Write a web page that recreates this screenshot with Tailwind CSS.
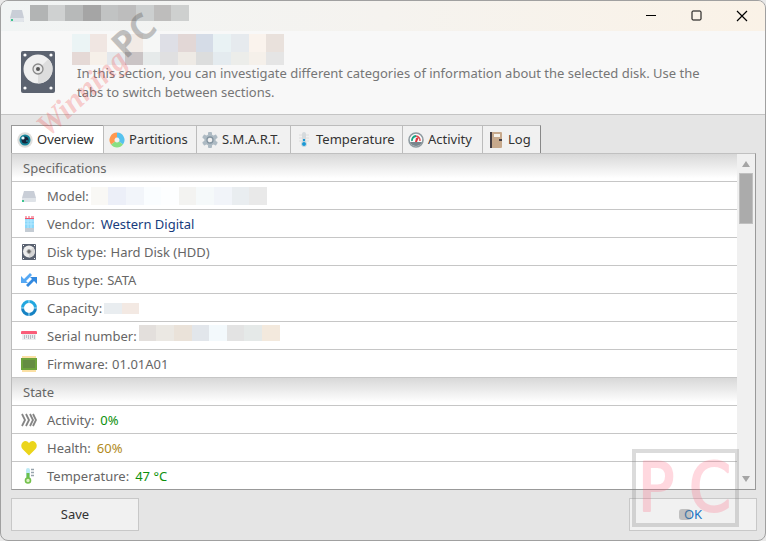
<!DOCTYPE html>
<html lang="en">
<head>
    <meta charset="UTF-8">
    <meta name="viewport" content="width=device-width, initial-scale=1.0">
    <title>Disk information</title>
    <script src="https://cdn.jsdelivr.net/npm/@tailwindcss/browser@4"></script>
</head>
<body class="bg-[#e9e9e9] font-['Noto_Sans','Open_Sans',sans-serif] text-[13px] leading-[19px] text-[#666]">

    <div class="relative flex h-screen min-h-96 flex-col overflow-hidden rounded-lg border border-[#a0a0a0] bg-[#e5e5e5]">

        <!-- Title bar -->
        <header class="flex h-[30px] shrink-0 items-center bg-linear-to-r from-[#f1f4f4] via-[#f5f3ef] to-[#faf2e7] pl-2">
            <svg class="h-4 w-4" viewBox="0 0 16 16"><path d="M3 2h10l2 8v4H1v-4z" fill="#c9ced7"/><path d="M1 10h14v3q0 1-1 1H2q-1 0-1-1z" fill="#e1e5ea"/><rect x="2" y="11" width="2" height="2" fill="#3fc48f"/></svg>
            <div class="ml-[5px] -mt-[6px] grid h-4 w-[159px] grid-cols-9">
                <i class="bg-[#b2b4b4]"></i><i class="bg-[#cfd1d1]"></i><i class="bg-[#b7b9b9]"></i><i class="bg-[#a5a5a5]"></i><i class="bg-[#c1c3c3]"></i><i class="bg-[#bdbdbd]"></i><i class="bg-[#cccfcf]"></i><i class="bg-[#bebdbc]"></i><i class="bg-[#ced0cf]"></i>
            </div>
            <div class="ml-auto flex h-full text-black">
                <button class="grid w-[46px] place-items-center" aria-label="Minimize"><svg class="h-3 w-3" viewBox="0 0 12 12" stroke="currentColor"><path d="M1 5.500h10"/></svg></button>
                <button class="grid w-[45px] place-items-center" aria-label="Maximize"><svg class="h-3 w-3" viewBox="0 0 12 12" fill="none" stroke="currentColor"><rect x="1" y="1" width="9" height="9" rx="1"/></svg></button>
                <button class="grid w-[46px] place-items-center" aria-label="Close"><svg class="h-3 w-3" viewBox="0 0 12 12" stroke="currentColor" stroke-width="1.200"><path d="M1 1l10 10M11 1L1 11"/></svg></button>
            </div>
        </header>

        <!-- Selected disk -->
        <div class="flex h-[84px] shrink-0 border-b border-[#c4c4c4] bg-[#f8f8f8] pl-5">
            <svg class="mt-5 h-[42px] w-[34px]" viewBox="0 0 34 42">
                <rect width="34" height="42" rx="2" fill="#5c6370"/>
                <g fill="#fff"><circle cx="4" cy="4" r="1.600"/><circle cx="30" cy="4" r="1.600"/><circle cx="4" cy="37" r="1.600"/><circle cx="30" cy="37" r="1.600"/></g>
                <circle cx="17" cy="18" r="14.500" fill="#f0f0f0"/><path d="M17 18l10.500-10A14.500 14.500 0 0 1 17 32.500z" fill="#ddd"/>
                <circle cx="17" cy="18" r="5" fill="#e8e8e8" stroke="#8a8a8a" stroke-width="1.300"/><circle cx="17" cy="18" r="2" fill="#555"/>
            </svg>
            <div class="ml-[17px] mt-[3px]">
                <div class="grid h-[31px] w-[212px] grid-cols-12 grid-rows-[18px_13px]">
                    <i class="bg-[#ebf4f5]"></i><i class="bg-[#f0e6e2]"></i><i class="bg-[#f9f8f6]"></i><i class="bg-[#f2ebe6]"></i><i class="bg-[#f6f7f6]"></i><i class="bg-[#dedfe6]"></i><i class="bg-[#e2d7d6]"></i><i class="bg-[#d5dce7]"></i><i class="bg-[#e9f2f4]"></i><i class="bg-[#e6eaee]"></i><i class="bg-[#faf3ed]"></i><i class="bg-[#e9e1dc]"></i>
                    <i class="bg-[#e5d9d6]"></i><i class="bg-[#f6f0e9]"></i><i class="bg-[#e4e8ec]"></i><i class="bg-[#cac4c5]"></i><i class="bg-[#e6eaea]"></i><i class="bg-[#e0e0e1]"></i><i class="bg-[#eeeae5]"></i><i class="bg-[#dcdddd]"></i><i class="bg-[#e4ebef]"></i><i class="bg-[#ecedea]"></i><i class="bg-[#f5f0ea]"></i><i class="bg-[#e5e5e5]"></i>
                </div>
                <p class="-mt-px max-w-[640px] pl-[5px] text-[#767676]">In this section, you can investigate different categories of information about the selected disk. Use the tabs to switch between sections.</p>
            </div>
        </div>

        <main class="flex min-h-0 flex-1 flex-col pt-[10px] pr-2 pb-[9px] pl-[10px]">
            <!-- Tabs -->
            <nav class="flex h-[28px] shrink-0 text-[#333]" role="tablist">
                <button role="tab" aria-selected="true" class="flex w-[92px] items-center gap-1 border-t border-l border-[#999] bg-white pl-[5px]">
                    <svg class="h-4 w-4 shrink-0" viewBox="0 0 16 16"><circle cx="8" cy="8" r="7.700" fill="#dededc"/><circle cx="8" cy="8" r="5.500" fill="#15849a"/><circle cx="8" cy="8" r="3.500" fill="#17263c"/><circle cx="6" cy="6" r="1.600" fill="#e9fbff"/><circle cx="10" cy="9" r="1" fill="#15849a"/></svg>Overview
                </button>
                <button role="tab" class="flex w-[93px] items-center gap-1 border-t border-l border-[#bcbcbc] bg-[#f1f1f1] pl-[5px]">
                    <svg class="h-4 w-4 shrink-0" viewBox="0 0 16 16" fill="none" stroke-width="5"><path d="M8 3A5 5 0 0 1 12 11" stroke="#56c2ee"/><path d="M12 11A5 5 0 0 1 4 11" stroke="#88df83"/><path d="M4 11A5 5 0 0 1 8 3" stroke="#ff984f"/></svg>Partitions
                </button>
                <button role="tab" class="flex w-[94px] items-center gap-1 border-t border-l border-[#bcbcbc] bg-[#f1f1f1] pl-[5px]">
                    <svg class="h-4 w-4 shrink-0" viewBox="0 0 16 16"><g fill="#adbac3"><circle cx="8" cy="8" r="5.700"/><rect x="6" width="4" height="16" rx="1"/><rect x="6" width="4" height="16" rx="1" transform="rotate(60 8 8)"/><rect x="6" width="4" height="16" rx="1" transform="rotate(120 8 8)"/></g><circle cx="8" cy="8" r="3" fill="#f1f1f1" stroke="#8494a0" stroke-width="1.300"/></svg>S.M.A.R.T.
                </button>
                <button role="tab" class="flex w-[112px] items-center gap-1 border-t border-l border-[#bcbcbc] bg-[#f1f1f1] pl-[5px]">
                    <svg class="h-4 w-4 shrink-0" viewBox="0 0 16 16"><path d="M3 3h10M3 6h10M3 9h10" stroke="#dcdcdc"/><rect x="6" width="4" height="13" rx="2" fill="#d5dadd"/><path d="M8 7v5" stroke="#1998d5" stroke-width="2"/><circle cx="8" cy="12" r="2.500" fill="#1998d5" stroke="#d3dce0"/></svg>Temperature
                </button>
                <button role="tab" class="flex w-[80px] items-center gap-1 border-t border-l border-[#bcbcbc] bg-[#f1f1f1] pl-[5px]">
                    <svg class="h-4 w-4 shrink-0" viewBox="0 0 16 16"><circle cx="8" cy="8" r="7" fill="#f8fafa" stroke="#8e9aa0" stroke-width="1.600"/><path d="M2 10h12A6.500 6.500 0 0 1 2 10" fill="#78858c"/><path d="M4 9A4.400 4.400 0 0 1 8 4" fill="none" stroke="#16a281" stroke-width="1.800"/><path d="M8 4A4.400 4.400 0 0 1 12 9" fill="none" stroke="#e34b52" stroke-width="1.500"/><path d="M7 10l1-4 3-1-2 5z" fill="#df353e"/></svg>Activity
                </button>
                <button role="tab" class="flex w-[59px] items-center gap-1 border-t border-x border-[#bcbcbc] border-r-[#888] bg-[#f1f1f1] pl-[5px]">
                    <svg class="h-4 w-4 shrink-0" viewBox="0 0 16 16"><rect x="2" width="12" height="16" rx="1" fill="#c7a98c"/><path d="M2 0h2v16H2z" fill="#443d42"/><rect x="6" y="2" width="6" height="3" fill="#f6f1e9"/><path d="M11 7h3v2h-3z" fill="#443d42"/></svg>Log
                </button>
            </nav>

            <!-- Details -->
            <div class="mr-px flex min-h-0 flex-1 border border-[#999] border-t-[#c0c0c0] border-l-[#bbb] bg-white">
                <div class="min-w-0 flex-1 overflow-hidden">
                    <h2 class="h-7 border-b border-[#c6c6c6] bg-linear-to-b from-[#d8d8d8] to-white to-90% px-[11px] leading-[29px]">Specifications</h2>
                    <dl>
                        <div class="flex h-7 items-center border-b border-[#c6c6c6] pt-px pl-[9px]">
                            <svg class="mr-[10px] h-4 w-4" viewBox="0 0 16 16"><path d="M3 3h10l2 7v3H1v-3z" fill="#c9ced7"/><path d="M1 10h14v3q0 1-1 1H2q-1 0-1-1z" fill="#dfe3e8"/><rect x="1" y="12" width="2" height="2" fill="#3fc48f"/></svg>
                            <dt>Model:</dt>
                            <dd class="ml-[2px] grid h-[18px] w-[176px] grid-cols-10"><i class="bg-[#f9f8f5]"></i><i class="bg-[#eceff8]"></i><i class="bg-[#f2f5fa]"></i><i class="bg-[#fafdff]"></i><i class="bg-[#fdfeff]"></i><i class="bg-[#f3f3f1]"></i><i class="bg-[#f5f9fa]"></i><i class="bg-[#f1f4f9]"></i><i class="bg-[#e9edf0]"></i><i class="bg-[#e9e9e9]"></i></dd>
                        </div>
                        <div class="flex h-7 items-center border-b border-[#c6c6c6] pt-px pl-[9px]">
                            <svg class="mr-[10px] h-4 w-4" viewBox="0 0 16 16"><rect x="4" y="2" width="9" height="10" fill="#8cd8fa"/><path d="M4 1h2M7 1h2M10 1h3M4 2.500h9" stroke="#f04d68"/><path d="M4 5h9M4 8h9M7 3v9M10 3v9" stroke="#b4e8ff"/><rect x="4" y="12" width="9" height="4" fill="#c4ccd4"/></svg>
                            <dt>Vendor:</dt><dd class="ml-[6px]"><a href="#" class="text-[#173c7d]">Western Digital</a></dd>
                        </div>
                        <div class="flex h-7 items-center border-b border-[#c6c6c6] pt-px pl-[9px]">
                            <svg class="mr-[10px] h-4 w-4" viewBox="0 0 16 16"><rect x="1" width="14" height="16" rx="1" fill="#596170"/><circle cx="8" cy="7.500" r="6" fill="#ededed"/><path d="M8 7.500l4-4a6 6 0 0 1-4 10z" fill="#d5d5d5"/><circle cx="8" cy="7.500" r="2" fill="#666" stroke="#aaa"/><path d="M2 14.500h1M13 14.500h1M2 1.500h1M13 1.500h1" stroke="#fff"/></svg>
                            <dt>Disk type:</dt><dd class="ml-1">Hard Disk (HDD)</dd>
                        </div>
                        <div class="flex h-7 items-center border-b border-[#c6c6c6] pt-px pl-[9px]">
                            <svg class="mr-[10px] h-4 w-4" viewBox="0 0 16 16"><path d="M0 4v7h7L5 9l6-6-2-2-6 6z" fill="#55a8f4"/><path d="M16 12V5H9l2 2-6 6 2 2 6-6z" fill="#3389df"/></svg>
                            <dt>Bus type:</dt><dd class="ml-1">SATA</dd>
                        </div>
                        <div class="flex h-7 items-center border-b border-[#c6c6c6] pt-px pl-[9px]">
                            <svg class="mr-[10px] h-4 w-4" viewBox="0 0 16 16" fill="none" stroke-width="3"><path d="M1.500 8a6.500 6.500 0 0 1 13 0" stroke="#22a7df"/><path d="M1.500 8a6.500 6.500 0 0 0 13 0" stroke="#1683c4"/><path d="M8 0v3M8 13v3M0 8h3M13 8h3" stroke="#b9e5f8" stroke-width="1"/></svg>
                            <dt>Capacity:</dt>
                            <dd class="ml-[2px] grid h-[11px] w-[35px] grid-cols-2"><i class="bg-[#e9edf0]"></i><i class="bg-[#f3e9e3]"></i></dd>
                        </div>
                        <div class="flex h-7 items-center border-b border-[#c6c6c6] pt-px pl-[9px]">
                            <svg class="mr-[10px] h-4 w-4" viewBox="0 0 16 16"><path d="M0 6V4q0-1 1-1h14q1 0 1 1v2z" fill="#fa5d79"/><rect x="1" y="6" width="14" height="6" fill="#eceef0"/><path d="M3.500 7v4M5.500 7v3M7.500 7v4M9.500 7v4M11.500 7v3M13.500 7v4" stroke="#b8bdc4"/></svg>
                            <dt>Serial number:</dt>
                            <dd class="-mt-[6px] ml-[2px] grid h-4 w-[141px] grid-cols-8"><i class="bg-[#e3dfdc]"></i><i class="bg-[#ebe8e3]"></i><i class="bg-[#eae2d9]"></i><i class="bg-[#e2e6eb]"></i><i class="bg-[#f3f9fc]"></i><i class="bg-[#e3e3e3]"></i><i class="bg-[#e5e9e8]"></i><i class="bg-[#f3e9dd]"></i></dd>
                        </div>
                        <div class="flex h-7 items-center border-b border-[#c6c6c6] pt-px pl-[9px]">
                            <svg class="mr-[10px] h-4 w-4" viewBox="0 0 16 16"><rect x="1" width="14" height="16" fill="#fbe0a4"/><rect y="2" width="16" height="12" fill="#6da33c"/><rect x="2" y="4" width="12" height="8" fill="#648c42"/></svg>
                            <dt>Firmware:</dt><dd class="ml-1">01.01A01</dd>
                        </div>
                    </dl>
                    <h2 class="h-7 border-b border-[#c6c6c6] bg-linear-to-b from-[#d8d8d8] to-white to-90% px-[11px] leading-[29px]">State</h2>
                    <dl>
                        <div class="flex h-7 items-center border-b border-[#c6c6c6] pt-px pl-[9px]">
                            <svg class="mr-[10px] h-4 w-4" viewBox="0 0 16 16" fill="none" stroke="#858585" stroke-width="1.800"><path d="M1 2l3 6-3 6M5 2l3 6-3 6M9 2l3 6-3 6M12 2l3 6-3 6"/></svg>
                            <dt>Activity:</dt><dd class="ml-[6px] text-[#0c900c]">0%</dd>
                        </div>
                        <div class="flex h-7 items-center border-b border-[#c6c6c6] pt-px pl-[9px]">
                            <svg class="mr-[10px] h-4 w-4" viewBox="0 0 16 16"><path d="M8 15.500L1.500 9Q-1 5.500 1.500 2.500 5-.500 8 3q3-3.500 6.500-.500Q17 5.500 14.500 9z" fill="#ebd51b"/></svg>
                            <dt>Health:</dt><dd class="ml-[6px] text-[#b18a1c]">60%</dd>
                        </div>
                        <div class="flex h-[27px] items-center pt-px pl-[9px]">
                            <svg class="mr-[10px] h-4 w-4" viewBox="0 0 16 16"><rect x="5" width="4" height="12" rx="2" fill="#bdeaf5"/><path d="M7 5v6" stroke="#6abf4b" stroke-width="3"/><circle cx="7" cy="12.500" r="2.500" fill="#dcf1c4" stroke="#73c04b" stroke-width="1.600"/><path d="M10 1.500h3M10 4.500h3M10 7.500h3" stroke="#98a4ad" stroke-width="1.300"/></svg>
                            <dt>Temperature:</dt><dd class="ml-[6px] text-[#0c900c]">47 °C</dd>
                        </div>
                    </dl>
                </div>

                <!-- Scrollbar -->
                <div class="flex w-[18px] shrink-0 flex-col items-center bg-[#f0f0f0] py-[7px]" aria-hidden="true">
                    <svg class="h-[6px] w-2 shrink-0" viewBox="0 0 8 6"><path d="M4 0l4 6H0z" fill="#a5a5a5"/></svg>
                    <div class="mt-[6px] h-[51px] w-[14px] shrink-0 border border-[#c0c0c0] bg-[#ababab]"></div>
                    <svg class="mt-auto h-[6px] w-2 shrink-0" viewBox="0 0 8 6"><path d="M0 0h8L4 6z" fill="#a5a5a5"/></svg>
                </div>
            </div>

            <!-- Actions -->
            <footer class="mt-2 flex h-[33px] shrink-0 justify-between">
                <button class="w-32 border border-[#c8c8c8] bg-[#f1f1f1] text-[#333]">Save</button>
                <button class="w-32 border border-[#c8c8c8] bg-[#f1f1f1] text-[#1874c4]">OK</button>
            </footer>
        </main>

        <!-- Watermarks -->
        <svg class="pointer-events-none absolute top-0 left-0 h-[150px] w-[180px] overflow-visible" viewBox="0 0 180 150">
            <g transform="translate(47 137) rotate(-43)">
                <text font-family="Liberation Serif" font-style="italic" font-weight="700" font-size="31" fill="#f04848" fill-opacity=".26">Winning</text>
                <text x="110" y="-4" font-family="Open Sans" font-weight="700" font-size="36" fill="#555" fill-opacity=".34">PC</text>
            </g>
        </svg>
        <svg class="pointer-events-none absolute right-[26px] bottom-[13px] h-[78px] w-[107px] overflow-visible" viewBox="0 0 107 78">
            <rect x="2" y="2" width="103" height="74" fill="none" stroke="#888" stroke-opacity=".3" stroke-width="4"/>
            <rect x="47" y="60" width="12" height="11" rx="3" fill="#777" fill-opacity=".4"/>
            <g opacity=".23" fill="#ff5a78" stroke="#ff5a78" stroke-width="2" stroke-linejoin="round">
                <text x="6 57" y="62" font-family="DejaVu Sans Condensed, DejaVu Sans" font-size="67">PC</text>
            </g>
        </svg>
    </div>
</body>
</html>
